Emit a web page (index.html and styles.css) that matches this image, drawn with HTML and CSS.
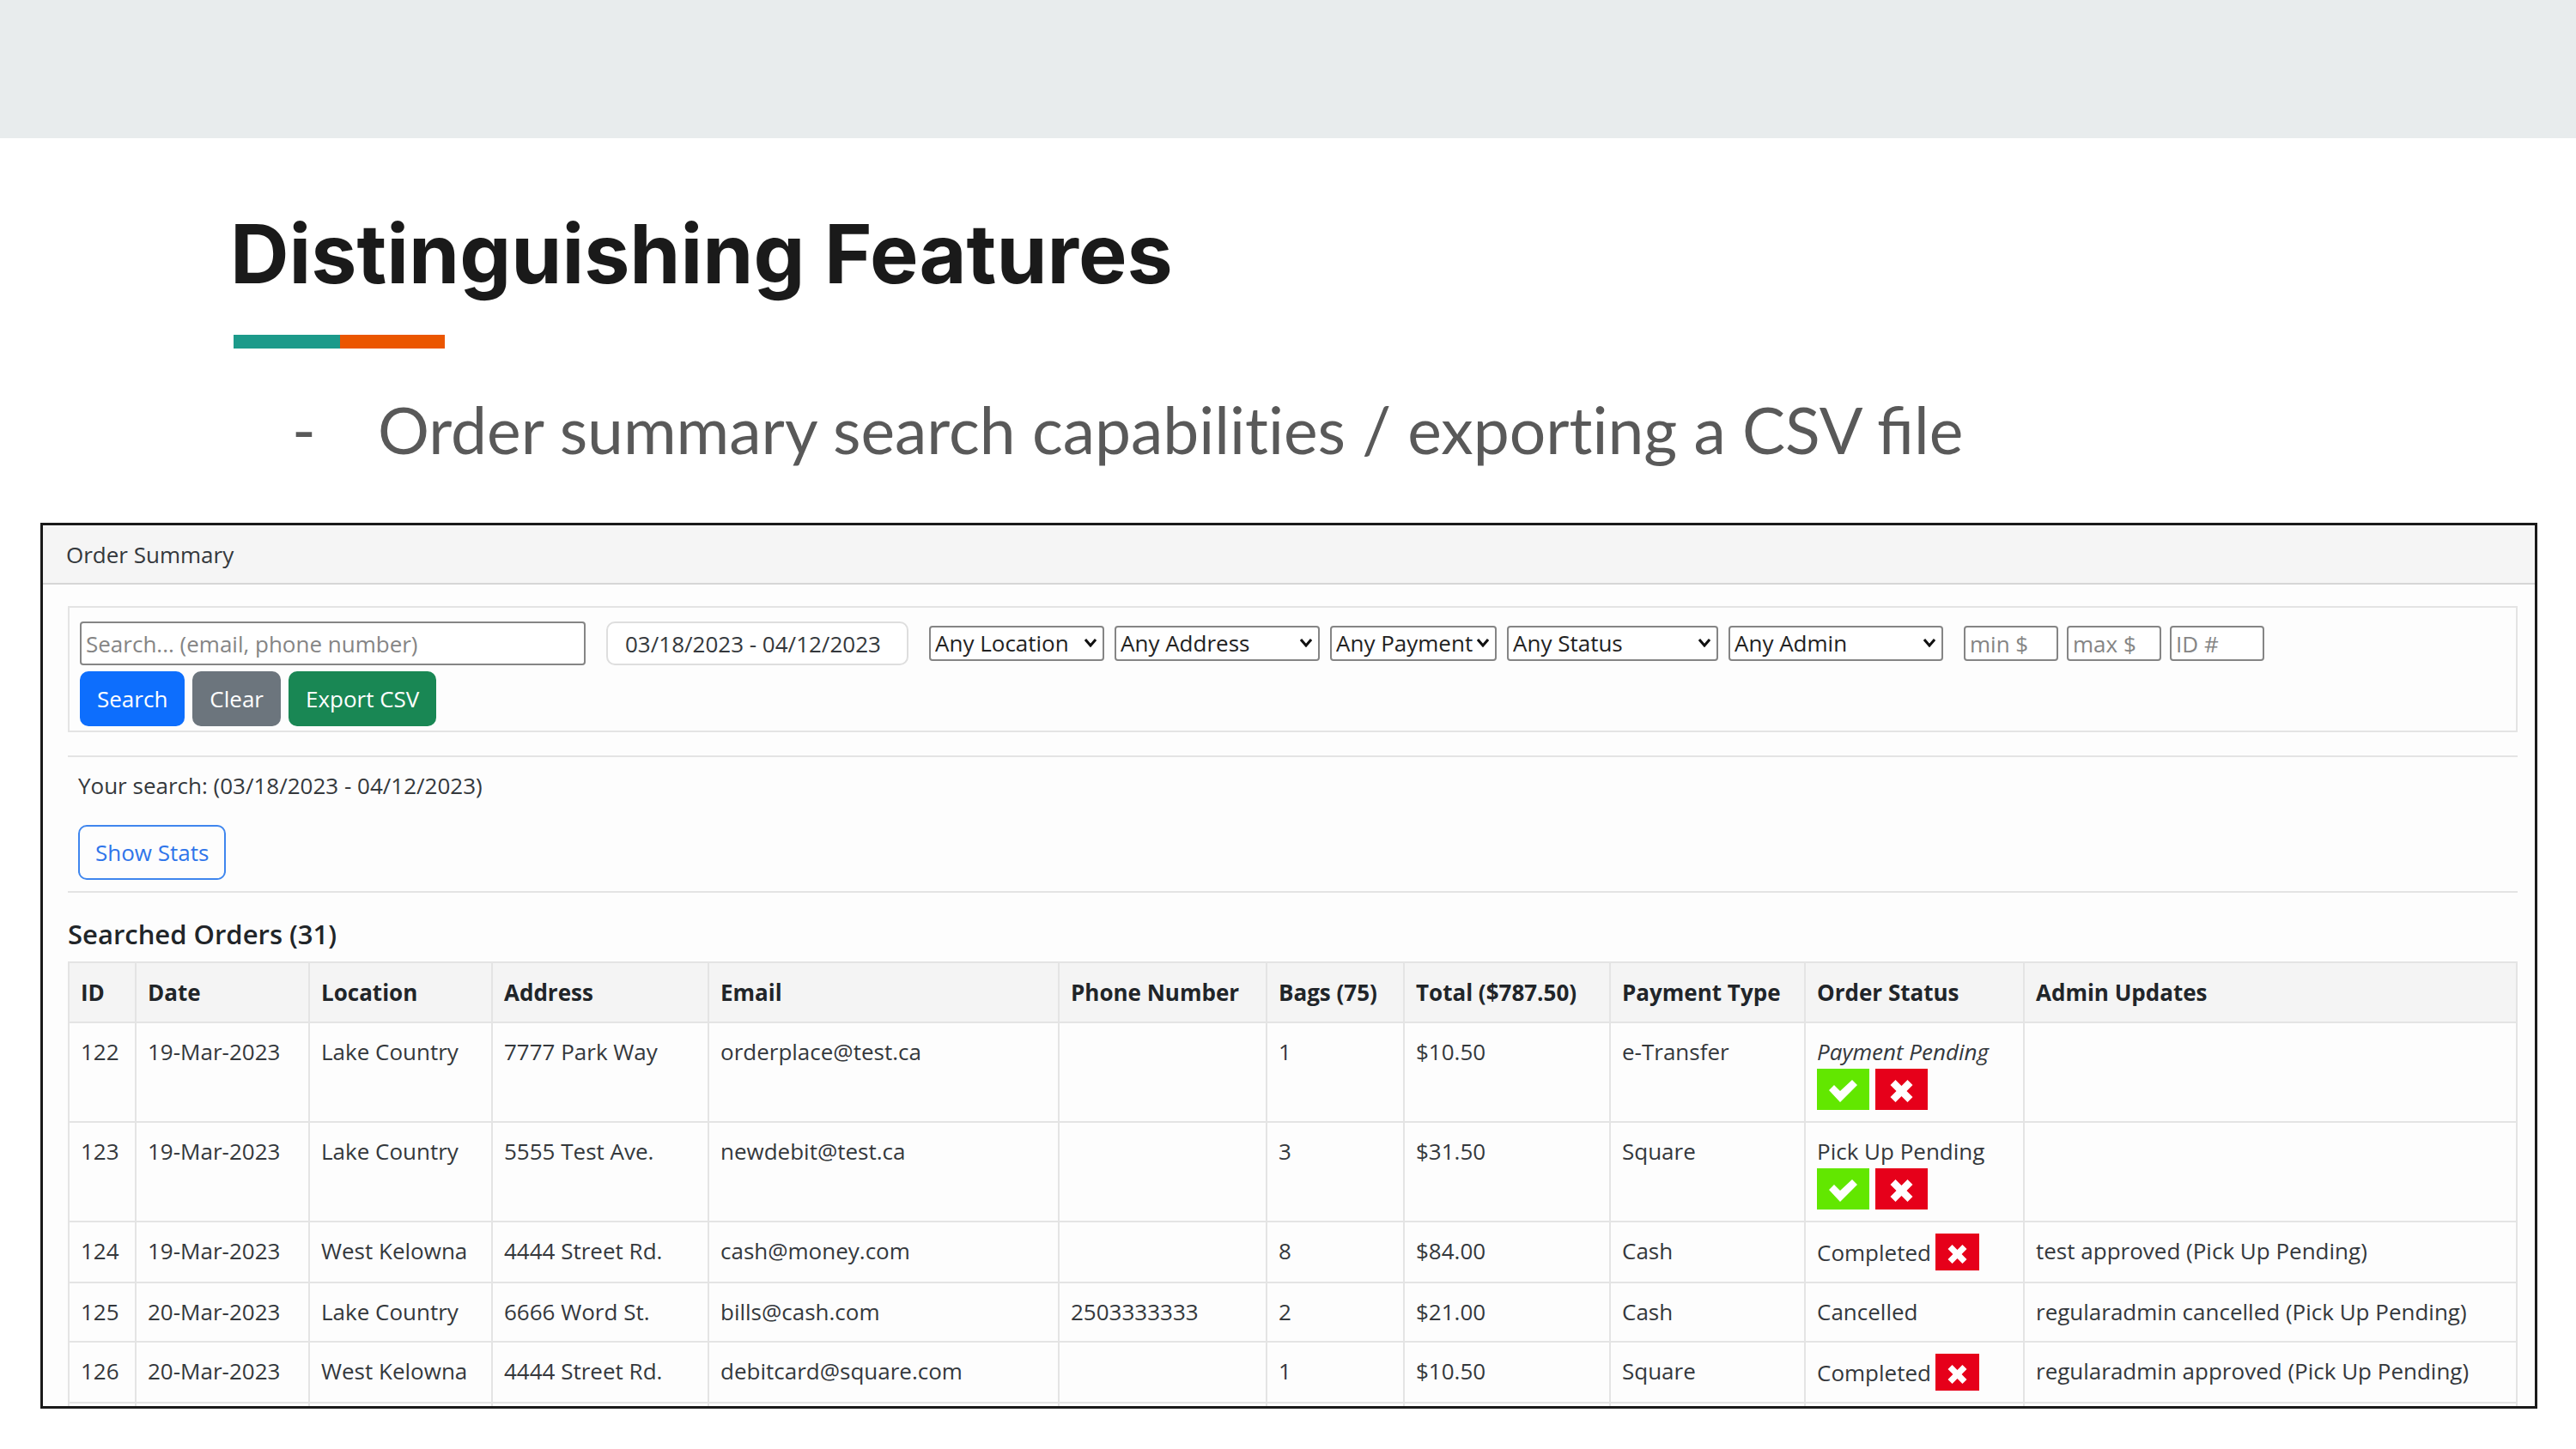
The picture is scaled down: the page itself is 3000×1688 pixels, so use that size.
FILE: index.html
```html
<!DOCTYPE html>
<html lang="en">
<head>
<meta charset="utf-8">
<title>Distinguishing Features</title>
<link rel="stylesheet" href="styles.css">
</head>
<body>
<svg class="sprite" aria-hidden="true">
  <symbol id="check" viewBox="0 0 33 26"><path d="M0 12 6 6l7 7L27 0l6 6-20 20z"/></symbol>
  <symbol id="cross" viewBox="0 0 26 26"><path d="M6 0l7 7 7-7 6 6-7 7 7 7-6 6-7-7-7 7-6-6 7-7-7-7z"/></symbol>
  <symbol id="chevron" viewBox="0 0 14 10"><path d="M1 1l6 7 6-7" fill="none" stroke="currentColor" stroke-width="3"/></symbol>
</svg>
<div class="band"></div>
<header class="intro">
  <h1 class="title">Distinguishing Features</h1>
  <div class="accent"></div>
  <ul class="points">
    <li class="point"><div>Order summary search <span class="plain">capabilities / exporting</span> a CSV file</div></li>
  </ul>
</header>
<main class="card">
  <div class="card-header">Order Summary</div>
  <div class="card-body">
    <form class="filters">
      <div class="fields">
        <input class="field search" type="text" placeholder="Search... (email, phone number)" aria-label="Search">
        <input class="field dates" type="text" value="03/18/2023 - 04/12/2023" aria-label="Date range">
        <div class="selects">
          <div class="pick location"><select class="field" aria-label="Location"><option>Any Location</option></select><svg class="chevron"><use href="#chevron"/></svg></div>
          <div class="pick address"><select class="field" aria-label="Address"><option>Any Address</option></select><svg class="chevron"><use href="#chevron"/></svg></div>
          <div class="pick payment"><select class="field" aria-label="Payment"><option>Any Payment</option></select><svg class="chevron"><use href="#chevron"/></svg></div>
          <div class="pick status"><select class="field" aria-label="Status"><option>Any Status</option></select><svg class="chevron"><use href="#chevron"/></svg></div>
          <div class="pick admin"><select class="field" aria-label="Admin"><option>Any Admin</option></select><svg class="chevron"><use href="#chevron"/></svg></div>
        </div>
        <div class="amounts">
          <input class="field amount" type="text" placeholder="min $" aria-label="Minimum total">
          <input class="field amount" type="text" placeholder="max $" aria-label="Maximum total">
          <input class="field amount" type="text" placeholder="ID #" aria-label="Order ID">
        </div>
      </div>
      <div class="actions">
        <button class="btn primary" type="button">Search</button>
        <button class="btn secondary" type="button">Clear</button>
        <button class="btn success" type="button">Export CSV</button>
      </div>
    </form>
    <section class="result">
      <p class="query">Your search: (03/18/2023 - 04/12/2023)</p>
      <button class="btn outline" type="button">Show Stats</button>
    </section>
    <h2 class="subtitle">Searched Orders (31)</h2>
    <table class="orders">
      <colgroup>
        <col class="c-id"><col class="c-date"><col class="c-location"><col class="c-address"><col class="c-email"><col class="c-phone"><col class="c-bags"><col class="c-total"><col class="c-payment"><col class="c-status"><col>
      </colgroup>
      <thead>
        <tr><th>ID</th><th>Date</th><th>Location</th><th>Address</th><th>Email</th><th>Phone Number</th><th>Bags (75)</th><th>Total ($787.50)</th><th>Payment Type</th><th>Order Status</th><th>Admin Updates</th></tr>
      </thead>
      <tbody>
        <tr><td>122</td><td>19-Mar-2023</td><td>Lake Country</td><td>7777 Park Way</td><td>orderplace@test.ca</td><td></td><td>1</td><td>$10.50</td><td>e-Transfer</td>
          <td class="state"><em>Payment Pending</em><div class="marks"><button class="mark approve" type="button" aria-label="Approve"><svg><use href="#check"/></svg></button><button class="mark cancel" type="button" aria-label="Cancel"><svg><use href="#cross"/></svg></button></div></td><td></td></tr>
        <tr><td>123</td><td>19-Mar-2023</td><td>Lake Country</td><td>5555 Test Ave.</td><td>newdebit@test.ca</td><td></td><td>3</td><td>$31.50</td><td>Square</td>
          <td class="state">Pick Up Pending<div class="marks"><button class="mark approve" type="button" aria-label="Approve"><svg><use href="#check"/></svg></button><button class="mark cancel" type="button" aria-label="Cancel"><svg><use href="#cross"/></svg></button></div></td><td></td></tr>
        <tr><td>124</td><td>19-Mar-2023</td><td>West Kelowna</td><td>4444 Street Rd.</td><td>cash@money.com</td><td></td><td>8</td><td>$84.00</td><td>Cash</td>
          <td class="state"><div class="inline-state">Completed<button class="mark cancel small" type="button" aria-label="Cancel"><svg><use href="#cross"/></svg></button></div></td><td>test approved (Pick Up Pending)</td></tr>
        <tr><td>125</td><td>20-Mar-2023</td><td>Lake Country</td><td>6666 Word St.</td><td>bills@cash.com</td><td>2503333333</td><td>2</td><td>$21.00</td><td>Cash</td>
          <td class="state">Cancelled</td><td>regularadmin cancelled (Pick Up Pending)</td></tr>
        <tr><td>126</td><td>20-Mar-2023</td><td>West Kelowna</td><td>4444 Street Rd.</td><td>debitcard@square.com</td><td></td><td>1</td><td>$10.50</td><td>Square</td>
          <td class="state"><div class="inline-state">Completed<button class="mark cancel small" type="button" aria-label="Cancel"><svg><use href="#cross"/></svg></button></div></td><td>regularadmin approved (Pick Up Pending)</td></tr>
        <tr class="next"><td></td><td></td><td></td><td></td><td></td><td></td><td></td><td></td><td></td><td></td><td></td></tr>
      </tbody>
    </table>
  </div>
</main>
</body>
</html>
```
FILE: styles.css
```css
* {
  box-sizing: border-box;
}

body {
  margin: 0;
  background: #fff;
  color: #34383c;
  font: 26px/40px "Open Sans", "Noto Sans", sans-serif;
}

.sprite {
  display: none;
}

.band {
  height: 161px;
  background: #e8eced;
}

/* Slide heading */
.intro {
  padding: 77px 268px 64px;
}

.title {
  margin: 0;
  color: #1a1a1a;
  font: 700 95px/116px Inter, sans-serif;
}

.accent {
  width: 246px;
  height: 16px;
  margin: 36px 0 49px 4px;
  background: linear-gradient(90deg, #1c9a8a 124px, #eb5600 124px);
}

.points {
  margin: 0;
  padding: 0 0 0 72px;
  list-style: none;
}

.point {
  display: flex;
  color: #595959;
  font: 75px/90px Lato, sans-serif;
}

.point::before {
  content: "-";
  flex: 0 0 100px;
}

.plain {
  font-variant-ligatures: none;
}

/* Order summary card */
.card {
  margin: 0 45px 47px 47px;
  border: 3px solid #1a1a1a;
  background: #fdfdfd;
}

.card-header {
  padding: 14px 27px 13px;
  border-bottom: 2px solid #d6d6d6;
  background: #f5f5f5;
}

.card-body {
  padding: 25px 20px 0 29px;
}

.filters {
  display: flex;
  flex-direction: column;
  gap: 7px;
  padding: 16px 12px 5px;
  border: 2px solid #e4e4e4;
}

.fields {
  display: flex;
  flex-wrap: wrap;
  align-items: center;
  gap: 12px 24px;
}

.selects {
  display: flex;
  gap: 12px;
}

.amounts {
  display: flex;
  gap: 10px;
}

.field {
  height: 41px;
  padding: 0 5px;
  border: 2px solid #858585;
  border-radius: 4px;
  background: #fff;
  color: #222;
  font: inherit;
}

.field::placeholder {
  color: #858585;
  opacity: 1;
}

.search {
  width: 589px;
  height: 51px;
}

.dates {
  width: 352px;
  height: 51px;
  padding: 0 20px;
  border-color: #dedede;
  border-radius: 10px;
  color: #34383c;
}

.amount {
  width: 110px;
}

.pick {
  position: relative;
}

.pick select {
  display: block;
  width: 100%;
  line-height: 37px;
  appearance: none;
}

.location { width: 204px; }
.address { width: 239px; }
.payment { width: 194px; }
.status { width: 246px; }
.admin { width: 250px; }

.chevron {
  position: absolute;
  top: 15px;
  right: 9px;
  width: 14px;
  height: 10px;
  color: #111;
  pointer-events: none;
}

.actions {
  display: flex;
  gap: 9px;
}

.btn {
  height: 64px;
  padding: 0 18px;
  border: 2px solid transparent;
  border-radius: 10px;
  color: #fff;
  font: inherit;
}

.primary { background: #0d6efd; }
.secondary { background: #6c757d; }
.success { background: #198754; }

.outline {
  border-color: #3f86ee;
  background: transparent;
  color: #2f75ea;
}

.result {
  margin-top: 27px;
  padding: 13px 12px;
  border: solid #e4e4e4;
  border-width: 2px 0;
}

.query {
  margin: 0 0 26px;
}

.result .btn {
  display: block;
}

.subtitle {
  margin: 28px 0 12px;
  color: #212529;
  font-size: 31px;
  font-weight: 600;
  line-height: 40px;
}

/* Orders table */
.orders {
  width: 100%;
  border-collapse: collapse;
  table-layout: fixed;
}

.orders th,
.orders td {
  padding: 13px 13px 14px;
  border: 2px solid #e4e4e4;
  text-align: left;
  vertical-align: top;
}

.orders th {
  padding-top: 14px;
  background: #f4f4f4;
  color: #212529;
  font-weight: 700;
}

.orders .state {
  padding-bottom: 13px;
}

.orders .next td {
  height: 4px;
  padding: 0;
  border-bottom: 0;
}

.c-id { width: 78px; }
.c-date { width: 202px; }
.c-location { width: 213px; }
.c-address { width: 252px; }
.c-email { width: 408px; }
.c-phone { width: 242px; }
.c-bags { width: 160px; }
.c-total { width: 240px; }
.c-payment { width: 227px; }
.c-status { width: 255px; }

.marks {
  display: flex;
  gap: 7px;
}

.inline-state {
  display: flex;
  align-items: center;
  gap: 5px;
}

.mark {
  display: flex;
  align-items: center;
  justify-content: center;
  width: 61px;
  height: 48px;
  padding: 4px 0 0;
  border: 0;
}

.mark svg {
  width: 33px;
  height: 26px;
  fill: #fff;
}

.approve { background: #62e700; }
.cancel { background: #e6001a; }

.small {
  width: 51px;
  height: 43px;
}

.small svg {
  height: 22px;
}
```
